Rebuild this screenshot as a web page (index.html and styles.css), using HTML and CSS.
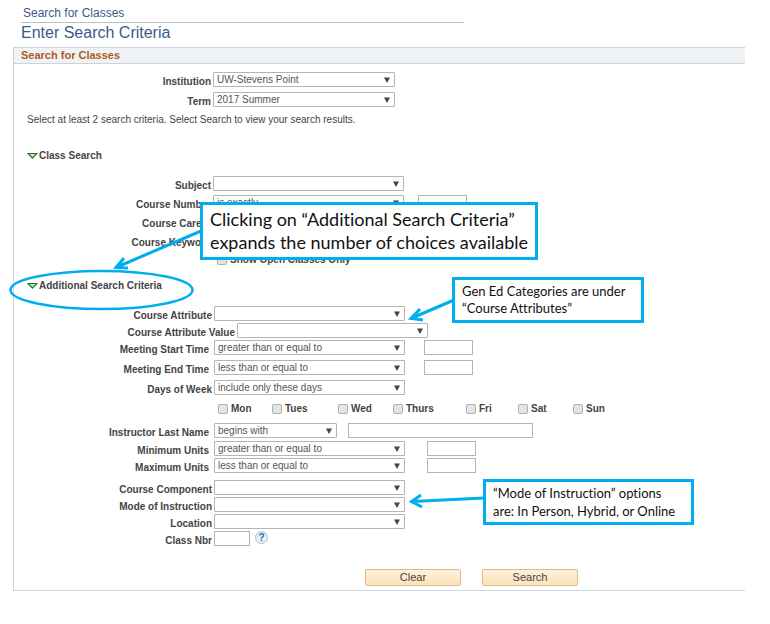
FILE: index.html
```
<!DOCTYPE html>
<html lang="en">
<head>
  <meta charset="UTF-8">
  <meta name="viewport" content="width=device-width, initial-scale=1.0">
  <title>Search for Classes</title>
  <link rel="stylesheet" href="styles.css">
</head>
<body>
  <div class="page">
    <header class="page-header">
      <p class="breadcrumb">Search for Classes</p>
      <h1>Enter Search Criteria</h1>
    </header>

    <form class="panel">
      <h2 class="panel-title">Search for Classes</h2>

      <!-- Institution and term -->
      <div class="group group-top">
        <div class="row">
          <label for="institution">Institution</label>
          <select id="institution" class="medium"><option>UW-Stevens Point</option></select>
        </div>
        <div class="row">
          <label for="term">Term</label>
          <select id="term" class="medium"><option>2017 Summer</option></select>
        </div>
      </div>
      <p class="hint">Select at least 2 search criteria. Select Search to view your search results.</p>

      <!-- Class Search -->
      <h3 class="section-title">
        <svg width="11" height="8" viewBox="0 0 11 8"><path d="M1 1.500h9L5.500 6.200z" fill="#b5f0a5" stroke="#2c6a35" stroke-width="1.200"/></svg>
        Class Search
      </h3>
      <div class="group group-class">
        <div class="row">
          <label for="subject">Subject</label>
          <select id="subject"><option></option></select>
        </div>
        <div class="row">
          <label for="number-op">Course Number</label>
          <select id="number-op"><option>is exactly</option></select>
          <input type="text" class="short" aria-label="Course Number">
        </div>
        <div class="row">
          <label for="career">Course Career</label>
          <select id="career"><option></option></select>
        </div>
        <div class="row">
          <label for="keyword">Course Keyword</label>
          <input type="text" id="keyword" class="wide">
        </div>
        <div class="row open-row">
          <label class="check"><input type="checkbox" checked> Show Open Classes Only</label>
        </div>
      </div>

      <!-- Additional Search Criteria -->
      <h3 class="section-title">
        <svg width="11" height="8" viewBox="0 0 11 8"><path d="M1 1.500h9L5.500 6.200z" fill="#b5f0a5" stroke="#2c6a35" stroke-width="1.200"/></svg>
        Additional Search Criteria
      </h3>
      <div class="group group-extra">
        <div class="row">
          <label for="attribute">Course Attribute</label>
          <select id="attribute"><option></option></select>
        </div>
        <div class="row row-indent">
          <label for="attribute-value">Course Attribute Value</label>
          <select id="attribute-value"><option></option></select>
        </div>
        <div class="row compare spaced">
          <label for="start-op">Meeting Start Time</label>
          <select id="start-op"><option>greater than or equal to</option></select>
          <input type="text" class="short" aria-label="Meeting Start Time">
        </div>
        <div class="row compare spaced">
          <label for="end-op">Meeting End Time</label>
          <select id="end-op"><option>less than or equal to</option></select>
          <input type="text" class="short" aria-label="Meeting End Time">
        </div>
        <div class="row">
          <label for="days-op">Days of Week</label>
          <select id="days-op"><option>include only these days</option></select>
        </div>
        <div class="days">
          <label class="check"><input type="checkbox"> Mon</label>
          <label class="check"><input type="checkbox"> Tues</label>
          <label class="check"><input type="checkbox"> Wed</label>
          <label class="check"><input type="checkbox"> Thurs</label>
          <label class="check"><input type="checkbox"> Fri</label>
          <label class="check"><input type="checkbox"> Sat</label>
          <label class="check"><input type="checkbox"> Sun</label>
        </div>
        <div class="row compare name-row">
          <label for="name-op">Instructor Last Name</label>
          <select id="name-op" class="small"><option>begins with</option></select>
          <input type="text" class="wide" aria-label="Instructor Last Name">
        </div>
        <div class="row compare units">
          <label for="min-op">Minimum Units</label>
          <select id="min-op"><option>greater than or equal to</option></select>
          <input type="text" class="short" aria-label="Minimum Units">
        </div>
        <div class="row compare units units-end">
          <label for="max-op">Maximum Units</label>
          <select id="max-op"><option>less than or equal to</option></select>
          <input type="text" class="short" aria-label="Maximum Units">
        </div>
        <div class="row">
          <label for="component">Course Component</label>
          <select id="component"><option></option></select>
        </div>
        <div class="row">
          <label for="mode">Mode of Instruction</label>
          <select id="mode"><option></option></select>
        </div>
        <div class="row">
          <label for="location">Location</label>
          <select id="location"><option></option></select>
        </div>
        <div class="row">
          <label for="class-nbr">Class Nbr</label>
          <input type="text" id="class-nbr" class="tiny">
          <button type="button" class="help" aria-label="Help">?</button>
        </div>
      </div>

      <div class="actions">
        <button type="reset" class="btn">Clear</button>
        <button type="button" class="btn">Search</button>
      </div>
    </form>

    <!-- Notes drawn over the form -->
    <svg class="marks" width="770" height="624" viewBox="0 0 770 624" fill="none" stroke="#00aeef" stroke-width="3">
      <ellipse cx="101.500" cy="290" rx="91" ry="19" stroke-width="2.500"/>
      <path d="M201 231L117 267M124 258L116 267.500L128 268"/>
      <path d="M454 300L412 318M420 309L411 318.500L423 320"/>
      <path d="M484 498L412 501.500M421 495L411.500 501.500L422 507"/>
    </svg>
    <p class="note note-criteria">Clicking on “Additional Search Criteria”<br>expands the number of choices available</p>
    <p class="note note-attributes">Gen Ed Categories are under<br>“Course Attributes”</p>
    <p class="note note-mode">“Mode of Instruction” options<br>are: In Person, Hybrid, or Online</p>
  </div>
</body>
</html>
```
FILE: styles.css
```
* {
  margin: 0;
  padding: 0;
  box-sizing: border-box;
}

body {
  font-family: "Liberation Sans", Arial, sans-serif;
  font-size: 11px;
  color: #444;
  background-color: #fff;
}

.page {
  position: relative;
  padding: 4px 25px 32px 13px;
}

/* Header */
.page-header {
  padding-left: 8px;
  color: #3b5a8c;
}

.breadcrumb {
  width: 443px;
  max-width: 100%;
  padding-left: 2px;
  font-size: 12px;
  line-height: 18px;
  border-bottom: 1px solid #c0c0c0;
}

h1 {
  font-size: 16px;
  font-weight: normal;
  line-height: 20px;
  padding-bottom: 4px;
}

/* Panel */
.panel {
  border-left: 1px solid #ccd3da;
  border-bottom: 1px solid #ccd8e2;
}

.panel-title {
  padding-left: 7px;
  font-size: 11px;
  line-height: 15px;
  color: #b05a1e;
  background-color: #f0f3f5;
  border-top: 1px solid #ccd3da;
  border-bottom: 1px solid #ccd3da;
}

.hint {
  padding: 4px 0 0 13px;
  font-size: 10px;
  line-height: 14px;
}

.section-title {
  display: flex;
  align-items: center;
  gap: 1px;
  padding-left: 13px;
  font-size: 10px;
  line-height: 14px;
}

/* Rows */
.group {
  display: flex;
  flex-direction: column;
}

.group-top {
  gap: 3px;
  padding-top: 8px;
}

.hint + .section-title {
  padding-top: 22px;
}

.group-class {
  gap: 2px;
  padding: 13px 0 12px;
}

.group-extra {
  padding-top: 13px;
}

.row {
  display: flex;
  align-items: flex-start;
}

.row > label:first-child {
  width: 200px;
  padding: 2px 2px 0 0;
  font-size: 10px;
  line-height: 15px;
  font-weight: bold;
  text-align: right;
}

.group-top label:first-child,
.group-class label:first-child {
  width: 199px;
}

.row-indent > label:first-child {
  width: 223px;
}

.compare > label:first-child {
  padding-right: 5px;
}

.spaced {
  margin-bottom: 3px;
}

.name-row {
  margin-bottom: 1px;
}

.units-end {
  margin-bottom: 5px;
}

select,
input[type="text"] {
  height: 15px;
  border: 1px solid #b4b4b4;
  border-radius: 0;
  font-family: inherit;
  font-size: 10px;
  color: #555;
  background-color: #fff;
}

select {
  width: 191px;
  padding: 0 16px 0 3px;
  border-radius: 1px;
  appearance: none;
  background-image: url("data:image/svg+xml,%3Csvg xmlns='http://www.w3.org/2000/svg' width='6' height='6'%3E%3Cpath d='M0 0.500h6L3 6z' fill='%23444'/%3E%3C/svg%3E");
  background-repeat: no-repeat;
  background-position: right 4px center;
}

select.medium {
  width: 182px;
}

select.small {
  width: 123px;
}

.short {
  width: 49px;
  margin-left: 19px;
}

.group-class .short {
  margin-left: 14px;
}

.units .short {
  margin-left: 22px;
}

.wide {
  width: 185px;
}

select + .wide {
  margin-left: 11px;
}

.tiny {
  width: 36px;
}

/* Tick boxes */
.check {
  display: flex;
  align-items: center;
  gap: 3px;
  font-size: 10px;
  font-weight: bold;
}

.check input {
  appearance: none;
  width: 10px;
  height: 10px;
  border: 1px solid #b0b0b0;
  border-radius: 2px;
  background-color: #e4e4e4;
}

.row.open-row > .check {
  width: auto;
  padding: 0 0 0 203px;
}

.days {
  display: grid;
  grid-template-columns: 54px 66px 55px 73px 52px 55px auto;
  padding: 6px 0 8px 204px;
  line-height: 12px;
}

.help {
  width: 13px;
  height: 13px;
  margin-left: 5px;
  border: 1px solid #a9bdd6;
  border-radius: 50%;
  background-color: #e6eff9;
  color: #3b6aa5;
  font: bold 10px/11px "Liberation Sans", sans-serif;
}

/* Buttons */
.actions {
  display: flex;
  gap: 21px;
  padding: 21px 0 4px 351px;
}

.btn {
  width: 96px;
  height: 17px;
  border: 1px solid #e0b88a;
  border-radius: 2px;
  background: linear-gradient(#fdf1dc, #fbe2b8);
  font-family: inherit;
  font-size: 11px;
  line-height: 15px;
  color: #444;
}

/* Notes */
.marks {
  position: absolute;
  top: 0;
  left: 0;
  pointer-events: none;
}

.note {
  position: absolute;
  border: 3px solid #00aeef;
  background-color: #fff;
  color: #111;
  font-family: Lato, "Open Sans", sans-serif;
  font-size: 13px;
  font-variant-ligatures: none;
  line-height: 17px;
  white-space: nowrap;
}

.note-criteria {
  top: 202px;
  left: 200px;
  width: 338px;
  padding: 3px 7px;
  font-size: 18px;
  line-height: 23px;
}

.note-attributes {
  top: 277px;
  left: 452px;
  width: 192px;
  padding: 3px 7px;
}

.note-mode {
  top: 479px;
  left: 483px;
  width: 211px;
  padding: 2px 7px;
  line-height: 18px;
}
```
